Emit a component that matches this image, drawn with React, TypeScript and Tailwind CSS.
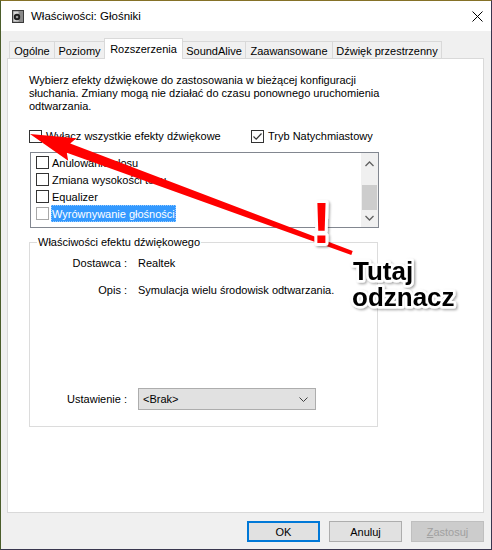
import React from "react";

function Box({ checked, light }: { checked?: boolean; light?: boolean }) {
  return (
    <span
      className={
        light
          ? "w-[13px] h-[13px] shrink-0 border border-[#a8a8a8] bg-white flex items-center justify-center"
          : "w-[13px] h-[13px] shrink-0 border border-[#333333] bg-white flex items-center justify-center"
      }
    >
      {checked && (
        <svg width="11" height="11" viewBox="0 0 11 11">
          <path d="M1.5 5.5 L4.2 8.2 L9.5 2.5" fill="none" stroke="#333333" strokeWidth="1.2" />
        </svg>
      )}
    </span>
  );
}

function Tab({ label, w, active, first }: { label: string; w: string; active?: boolean; first?: boolean }) {
  if (active) {
    return (
      <div className={`${w} -ml-px relative z-10 h-[21px] bg-white border-l border-t border-r border-[#d9d9d9] flex justify-center pt-[2px] whitespace-nowrap`}>
        {label}
      </div>
    );
  }
  return (
    <div className={`${w} ${first ? "" : "-ml-px"} h-[18px] bg-[#f0f0f0] border-l border-t border-r border-[#d9d9d9] flex justify-center pt-[1px] whitespace-nowrap`}>
      {label}
    </div>
  );
}

export default function App() {
  return (
    <div className="w-[492px] h-[550px] flex flex-col border border-t-[#857127] border-l-[#4b5d2b] border-r-[#39364f] border-b-[#39364f] font-['Liberation_Sans',sans-serif] text-[11px] leading-[16px] text-black relative overflow-hidden">
      {/* title bar */}
      <div className="h-[30px] bg-white flex items-center shrink-0 text-[11.5px]">
        <svg width="12" height="13" viewBox="0 0 12 13" className="ml-[11px] mt-[1px]">
          <rect x="0.5" y="0.5" width="11" height="12" fill="#8a8a8a" stroke="#3a3a3a" />
          <rect x="1.5" y="1.5" width="5" height="10" fill="#d8d8d8" />
          <circle cx="5" cy="7" r="3.2" fill="#1e1e1e" />
          <circle cx="5" cy="7" r="1.3" fill="#9a9a9a" />
        </svg>
        <span className="ml-[7px]">Właściwości: Głośniki</span>
        <svg width="11" height="11" viewBox="0 0 11 11" className="ml-auto mr-[8px]">
          <path d="M0.5 0.5 L10.5 10.5 M10.5 0.5 L0.5 10.5" stroke="#000" strokeWidth="1" />
        </svg>
      </div>

      {/* body */}
      <div className="flex-1 bg-[#f0f0f0] pt-[7px] px-[6px] flex flex-col">
        <div className="flex items-end h-[21px] pl-[2px]">
          <Tab label="Ogólne" w="w-[46px]" first />
          <Tab label="Poziomy" w="w-[51px]" />
          <Tab label="Rozszerzenia" w="w-[79px]" active />
          <Tab label="SoundAlive" w="w-[64px]" />
          <Tab label="Zaawansowane" w="w-[88px]" />
          <Tab label="Dźwięk przestrzenny" w="w-[110px]" />
        </div>

        <div className="-mt-px w-[477px] h-[455px] bg-white border border-[#d9d9d9] pl-[21px] pt-[15px] flex flex-col">
          <p className="leading-[13px]">
            Wybierz efekty dźwiękowe do zastosowania w bieżącej konfiguracji
            <br />
            słuchania. Zmiany mogą nie działać do czasu ponownego uruchomienia
            <br />
            odtwarzania.
          </p>

          <div className="flex mt-[15px] h-[16px] items-center">
            <div className="flex items-center gap-[4px] w-[222px]">
              <Box />
              <span>Wyłącz wszystkie efekty dźwiękowe</span>
            </div>
            <div className="flex items-center gap-[4px]">
              <Box checked />
              <span>Tryb Natychmiastowy</span>
            </div>
          </div>

          {/* effects list */}
          <div className="mt-[8px] ml-px w-[349px] h-[76px] border border-[#828790] flex">
            <div className="flex-1 pl-[5px] pt-px flex flex-col">
              <div className="h-[17px] flex items-center gap-[3px]">
                <Box />
                <span>Anulowanie głosu</span>
              </div>
              <div className="h-[17px] flex items-center gap-[3px]">
                <Box />
                <span>Zmiana wysokości tonu</span>
              </div>
              <div className="h-[17px] flex items-center gap-[3px]">
                <Box />
                <span>Equalizer</span>
              </div>
              <div className="h-[17px] flex items-center gap-[3px]">
                <Box light />
                <span className="h-[17px] bg-[#3399ff] text-white px-[1px] -ml-[1px] flex items-center outline outline-1 outline-dotted outline-[#99ccff] -outline-offset-1">
                  Wyrównywanie głośności
                </span>
              </div>
            </div>
            <div className="w-[17px] bg-[#f0f0f0] flex flex-col items-center">
              <svg width="9" height="6" viewBox="0 0 9 6" className="mt-[8px]">
                <path d="M0.5 5 L4.5 1 L8.5 5" fill="none" stroke="#606060" strokeWidth="1.3" />
              </svg>
              <div className="w-[15px] h-[25px] bg-[#cdcdcd] mt-[18px]" />
              <svg width="9" height="6" viewBox="0 0 9 6" className="mt-auto mb-[6px]">
                <path d="M0.5 1 L4.5 5 L8.5 1" fill="none" stroke="#606060" strokeWidth="1.3" />
              </svg>
            </div>
          </div>

          {/* effect properties */}
          <fieldset className="mt-[6px] w-[349px] border border-[#dcdcdc]">
            <legend className="ml-[7px] px-px leading-[16px]">Właściwości efektu dźwiękowego</legend>
            <div className="h-[176px] flex flex-col pt-[5px] pb-[16px]">
              <div className="flex h-[16px] items-center">
                <span className="w-[97px] text-right">Dostawca :</span>
                <span className="ml-[11px]">Realtek</span>
              </div>
              <div className="flex h-[16px] items-center mt-[11px]">
                <span className="w-[97px] text-right">Opis :</span>
                <span className="ml-[11px]">Symulacja wielu środowisk odtwarzania.</span>
              </div>
              <div className="flex h-[22px] items-center mt-auto">
                <span className="w-[97px] text-right">Ustawienie :</span>
                <div className="ml-[11px] w-[178px] h-[22px] bg-[#e1e1e1] border border-[#adadad] flex items-center pl-[4px] pr-[7px]">
                  <span>&lt;Brak&gt;</span>
                  <svg width="9" height="5" viewBox="0 0 9 5" className="ml-auto">
                    <path d="M0.5 0.5 L4.5 4.5 L8.5 0.5" fill="none" stroke="#404040" strokeWidth="1" />
                  </svg>
                </div>
              </div>
            </div>
          </fieldset>
        </div>

        {/* buttons */}
        <div className="flex justify-end gap-[9px] mt-[8px] pr-[1px]">
          <button className="w-[73px] h-[21px] bg-[#e1e1e1] border-2 border-[#0078d7]">OK</button>
          <button className="w-[73px] h-[21px] bg-[#e1e1e1] border border-[#adadad]">Anuluj</button>
          <button className="w-[73px] h-[21px] bg-[#cccccc] border border-[#bfbfbf] text-[#a0a0a0]">
            <span className="underline">Z</span>astosuj
          </button>
        </div>
      </div>

      {/* annotation overlay */}
      <svg className="absolute left-[-1px] top-[-1px] pointer-events-none" width="492" height="550" viewBox="0 0 492 550">
        <defs>
          <filter id="sh" x="-20%" y="-20%" width="140%" height="140%">
            <feDropShadow dx="1.5" dy="1.5" stdDeviation="1.2" floodColor="#000" floodOpacity="0.35" />
          </filter>
        </defs>
        <polygon
          points="30,134 76.4,138.2 70.2,143.4 352.7,251.1 351.3,254.9 66.8,152.8 68.2,160.8"
          fill="#ff0000"
        />
        <text
          x="321.5"
          y="243"
          textAnchor="middle"
          fontFamily="Liberation Sans, Arial, sans-serif"
          fontWeight="bold"
          fontSize="57"
          fill="#ff0000"
          stroke="#ffffff"
          strokeWidth="6"
          strokeLinejoin="round"
          paintOrder="stroke"
          filter="url(#sh)"
        >
          !
        </text>
        <text
          fontFamily="Liberation Sans, Arial, sans-serif"
          fontWeight="bold"
          fontSize="26"
          fill="#000000"
          stroke="#ffffff"
          strokeWidth="5"
          strokeLinejoin="round"
          paintOrder="stroke"
          filter="url(#sh)"
        >
          <tspan x="353" y="280">Tutaj</tspan>
          <tspan x="352" y="306">odznacz</tspan>
        </text>
      </svg>
    </div>
  );
}
